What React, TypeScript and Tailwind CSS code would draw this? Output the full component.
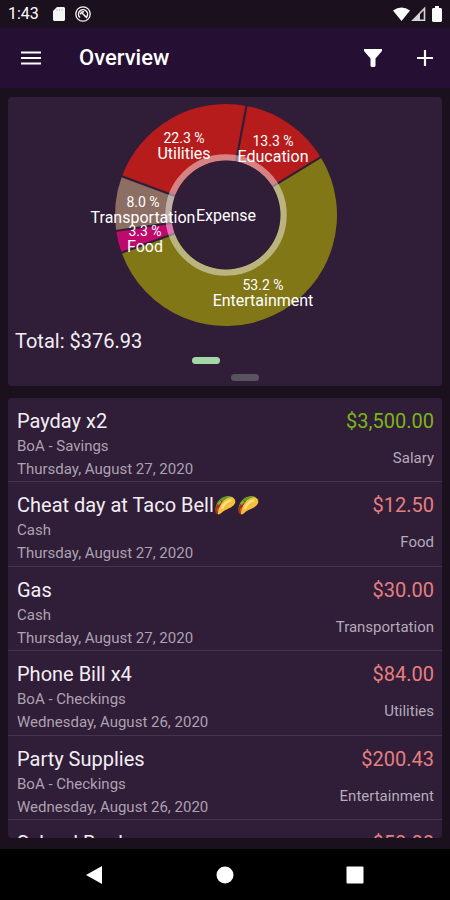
import React from "react";

type Slice = { name: string; pct: string; from: number; to: number; color: string; x: number; y: number };

const slices: Slice[] = [
  { name: "Education", pct: "13.3 %", from: 10.6, to: 58.6, color: "#b71c1c", x: 162, y: 52 },
  { name: "Entertainment", pct: "53.2 %", from: 58.6, to: 250.2, color: "#827717", x: 152, y: 196 },
  { name: "Food", pct: "3.3 %", from: 250.2, to: 261.8, color: "#bf0a6c", x: 34, y: 142 },
  { name: "Transportation", pct: "8.0 %", from: 261.8, to: 290.4, color: "#8d6e63", x: 32, y: 113 },
  { name: "Utilities", pct: "22.3 %", from: 290.4, to: 370.6, color: "#b71c1c", x: 73, y: 49 },
];

const CX = 115;
const CY = 118;

function point(r: number, deg: number) {
  const a = (deg * Math.PI) / 180;
  return `${(CX + r * Math.sin(a)).toFixed(2)} ${(CY - r * Math.cos(a)).toFixed(2)}`;
}

function arc(s: Slice) {
  const large = s.to - s.from > 180 ? 1 : 0;
  return `M${point(54, s.from)}L${point(111, s.from)}A111 111 0 ${large} 1 ${point(111, s.to)}L${point(54, s.to)}A54 54 0 ${large} 0 ${point(54, s.from)}Z`;
}

function ExpenseChart() {
  return (
    <svg viewBox="0 0 230 236" className="block h-[236px] w-[230px] overflow-visible" role="img" aria-label="Expense by category">
      {slices.map((s) => (
        <path key={s.name} d={arc(s)} fill={s.color} />
      ))}
      {slices.map((s) => (
        <path key={s.name} d={`M${point(53, s.from)}L${point(112, s.from)}`} stroke="#301d38" strokeWidth="2.2" />
      ))}
      <circle cx={CX} cy={CY} r="57.5" fill="none" stroke="#fff" strokeOpacity="0.45" strokeWidth="6.5" />
      <circle cx={CX} cy={CY} r="54.5" fill="#301d38" />
      <g fill="#fff" textAnchor="middle">
        {slices.map((s) => (
          <g key={s.name}>
            <text x={s.x} y={s.y - 3} fontSize="14">{s.pct}</text>
            <text x={s.x} y={s.y + 13} fontSize="16">{s.name}</text>
          </g>
        ))}
        <text x={CX} y={CY + 6} fontSize="16">Expense</text>
      </g>
    </svg>
  );
}

function Taco() {
  return (
    <svg viewBox="0 0 24 22" className="h-[22px] w-[23px]" aria-hidden="true">
      <path d="M2 19C0 12 5 3 12 2c3-.8 6 0 8 1L7 20z" fill="#6a9a2f" />
      <path d="M2 20c-1-6 1-11 5-14l3 2-5 13z" fill="#a8301c" />
      <path d="M3 10l3-4 2 2-3 3z" fill="#7fb23c" />
      <path d="M3 15l2-1 1 3-2 2z" fill="#e0562c" />
      <path d="M4 20C5 12 10 4 17 3c4-.4 6 3 5 6-2 5-9 6-13 9-2 2-5 4-5 2z" fill="#f4bf3c" />
      <path d="M8 15c2-5 5-8 10-9" stroke="#ffe07a" strokeWidth="2.500" fill="none" />
    </svg>
  );
}

type Entry = { title: string; tacos?: boolean; account: string; date: string; amount: string; category: string; income?: boolean };

const entries: Entry[] = [
  { title: "Payday x2", account: "BoA - Savings", date: "Thursday, August 27, 2020", amount: "$3,500.00", category: "Salary", income: true },
  { title: "Cheat day at Taco Bell", tacos: true, account: "Cash", date: "Thursday, August 27, 2020", amount: "$12.50", category: "Food" },
  { title: "Gas", account: "Cash", date: "Thursday, August 27, 2020", amount: "$30.00", category: "Transportation" },
  { title: "Phone Bill x4", account: "BoA - Checkings", date: "Wednesday, August 26, 2020", amount: "$84.00", category: "Utilities" },
  { title: "Party Supplies", account: "BoA - Checkings", date: "Wednesday, August 26, 2020", amount: "$200.43", category: "Entertainment" },
  { title: "School Books", account: "BoA - Checkings", date: "Wednesday, August 26, 2020", amount: "$50.00", category: "Education" },
];

function EntryRow({ entry }: { entry: Entry }) {
  return (
    <li className="flex h-[84px] shrink-0 justify-between border-b border-[#46344e] pt-[11px] pr-2 pl-[9px] even:h-[85px]">
      <div>
        <h2 className="flex items-center text-xl leading-6 text-[#f3eef4]">
          {entry.title}
          {entry.tacos && <><Taco /><Taco /></>}
        </h2>
        <p className="mt-0.5 text-[15px] leading-[23px] text-[#aca2b0]">{entry.account}</p>
        <p className="text-[15px] leading-[23px] text-[#aca2b0]">{entry.date}</p>
      </div>
      <div className="text-right">
        <p className={entry.income ? "text-xl leading-6 text-[#7cb518]" : "text-xl leading-6 text-[#e57f80]"}>{entry.amount}</p>
        <p className="mt-3.5 text-[15px] leading-[23px] text-[#b5abb9]">{entry.category}</p>
      </div>
    </li>
  );
}

export default function App() {
  return (
    <div className="flex h-screen flex-col bg-[#1b111e] font-[Roboto,sans-serif] text-white">
      <div className="flex h-7 shrink-0 items-center pr-2 pl-2">
        <span className="text-base leading-5">1:43</span>
        <svg viewBox="0 0 12 16" className="ml-3.5 h-4 w-3" aria-hidden="true">
          <path d="M4 1h7l1 1v12l-1 1H1l-1-1V5z" fill="#f5f5f5" />
          <path d="M4 3v2M6.500 3v2M9 3v2" stroke="#c9c5ca" />
        </svg>
        <svg viewBox="0 0 16 16" className="ml-2.5 size-4" fill="none" stroke="#f5f5f5" aria-hidden="true">
          <circle cx="8" cy="8" r="7.200" strokeWidth="1.300" />
          <path d="M5 11.500A4.500 4.500 0 1 1 11.500 11M5.500 8.500A2.500 2.500 0 0 1 9 6M7 7l5 5" strokeWidth="1.500" />
        </svg>
        <svg viewBox="0 0 17 16" className="ml-auto h-4 w-[17px]" aria-hidden="true">
          <path d="M0 4.500Q8.500-1.500 17 4.500L8.500 15z" fill="#fff" />
        </svg>
        <svg viewBox="0 0 15 16" className="ml-px h-4 w-[15px]" aria-hidden="true">
          <path d="M2 14.200L13.500 2.500v11.700z" fill="none" stroke="#d8d5d9" strokeWidth="1.600" />
          <path d="M1 15L9 7v8z" fill="#d8d5d9" />
        </svg>
        <svg viewBox="0 0 10 16" className="ml-1.5 h-4 w-2.5" aria-hidden="true">
          <path d="M3 0h4v2h2l1 1v12l-1 1H1l-1-1V3l1-1h2z" fill="#fff" />
        </svg>
      </div>

      <header className="flex h-[60px] shrink-0 items-center bg-[#250f33] pr-[17px] pl-[21px]">
        <button type="button" aria-label="Menu">
          <svg viewBox="0 0 20 14" className="h-3.5 w-5"><path d="M0 1.500h20M0 7h20M0 12.500h20" stroke="#fff" strokeWidth="2" /></svg>
        </button>
        <h1 className="ml-[38px] text-[22px] leading-7 font-medium">Overview</h1>
        <button type="button" aria-label="Filter" className="ml-auto">
          <svg viewBox="0 0 18 20" className="h-5 w-[18px]"><path d="M0 1h18v2l-6.500 7.500V18l-1 1h-3l-1-1v-7.500L0 3z" fill="#fff" /></svg>
        </button>
        <button type="button" aria-label="Add" className="ml-[35px]">
          <svg viewBox="0 0 16 16" className="size-4"><path d="M8 0v16M0 8h16" stroke="#fff" strokeWidth="2.200" /></svg>
        </button>
      </header>

      <main className="flex min-h-0 flex-1 flex-col gap-3 px-2 pt-[9px] pb-[11px]">
        <section className="h-[289px] shrink-0 rounded bg-[#301d38]">
          <div className="flex justify-center pl-px">
            <ExpenseChart />
          </div>
          <p className="pl-[7px] text-xl leading-4 text-[#f3eef4]">Total: $376.93</p>
          <div className="mx-auto mt-2 flex w-[67px] justify-between">
            <span className="h-[7px] w-7 rounded-full bg-[#a5d6a7]" />
            <span className="mt-[17px] h-[7px] w-7 rounded-full bg-[#59535f]" />
          </div>
        </section>

        <ul className="flex min-h-0 flex-1 flex-col overflow-hidden rounded bg-[#301d38]">
          {entries.map((e) => <EntryRow key={e.title} entry={e} />)}
        </ul>
      </main>

      <nav className="flex h-[51px] shrink-0 items-center justify-center gap-28 bg-black">
        <button type="button" aria-label="Back"><svg viewBox="0 0 18 18" className="size-[18px]"><path d="M16 0v18L0 9z" fill="#fff" /></svg></button>
        <button type="button" aria-label="Home"><svg viewBox="0 0 18 18" className="size-[18px]"><circle cx="9" cy="9" r="8.500" fill="#fff" /></svg></button>
        <button type="button" aria-label="Recent apps"><svg viewBox="0 0 18 18" className="size-[18px]"><rect x="0.500" y="0.500" width="17" height="17" rx="1" fill="#fff" /></svg></button>
      </nav>
    </div>
  );
}
